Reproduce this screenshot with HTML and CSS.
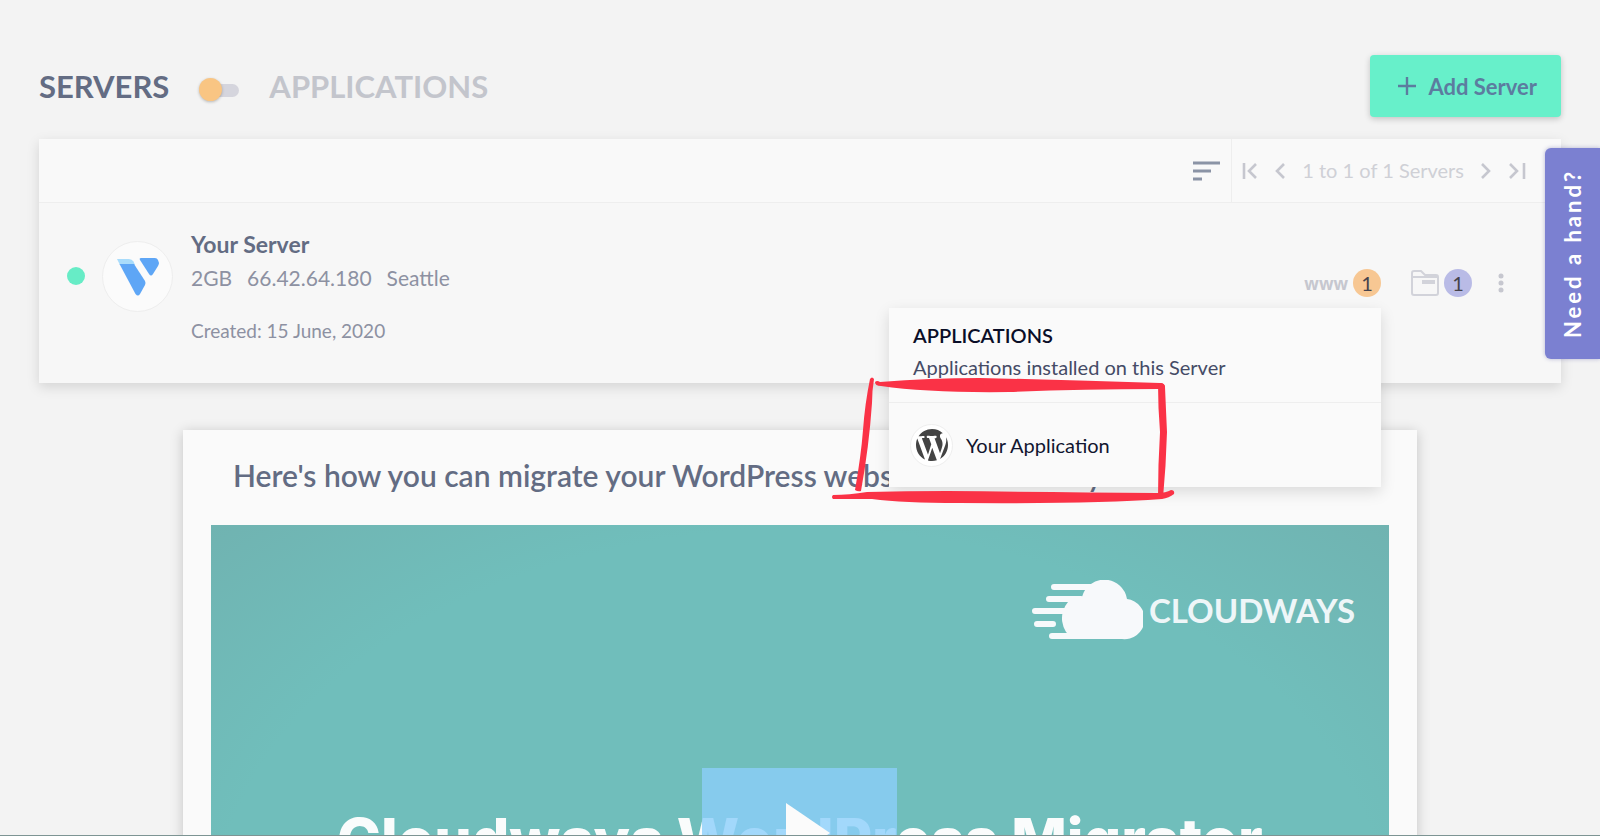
FILE: index.html
```html
<!DOCTYPE html>
<html lang="en">
<head>
    <meta charset="UTF-8">
    <meta name="viewport" content="width=device-width, initial-scale=1.0">
    <title>Servers</title>
    <link rel="stylesheet" href="styles.css">
</head>
<body>
    <header class="topbar">
        <label class="view-switch">
            <span class="view-name active">SERVERS</span>
            <input type="checkbox" class="switch" aria-label="Show applications">
            <span class="view-name">APPLICATIONS</span>
        </label>
        <button type="button" class="add-server">
            <svg width="18" height="18" viewBox="0 0 18 18"><path d="M9 0v18M0 9h18" stroke="currentColor" stroke-width="2.4"/></svg>
            Add Server
        </button>
    </header>

    <main>
        <!-- Server list -->
        <section class="panel">
            <div class="toolbar">
                <button type="button" class="icon-btn sort" aria-label="Sort">
                    <svg width="28" height="20" viewBox="0 0 28 20"><path d="M0 2h27M0 10h18M0 18h9" stroke="currentColor" stroke-width="3"/></svg>
                </button>
                <nav class="pager">
                    <button type="button" class="icon-btn" aria-label="First page">
                        <svg width="16" height="16" viewBox="0 0 16 16"><path d="M2 0v16M14 1L7 8l7 7" fill="none" stroke="currentColor" stroke-width="2.6"/></svg>
                    </button>
                    <button type="button" class="icon-btn" aria-label="Previous page">
                        <svg width="12" height="16" viewBox="0 0 12 16"><path d="M10 1L3 8l7 7" fill="none" stroke="currentColor" stroke-width="2.6"/></svg>
                    </button>
                    <span class="pager-text">1 to 1 of 1 Servers</span>
                    <button type="button" class="icon-btn" aria-label="Next page">
                        <svg width="12" height="16" viewBox="0 0 12 16"><path d="M2 1l7 7-7 7" fill="none" stroke="currentColor" stroke-width="2.6"/></svg>
                    </button>
                    <button type="button" class="icon-btn" aria-label="Last page">
                        <svg width="18" height="16" viewBox="0 0 18 16"><path d="M2 1l7 7-7 7M16 0v16" fill="none" stroke="currentColor" stroke-width="2.6"/></svg>
                    </button>
                </nav>
            </div>

            <div class="server">
                <span class="status"></span>
                <div class="avatar">
                    <svg width="44" height="40" viewBox="0 0 44 40">
                        <path d="M1 2h12q3 0 4.500 2.500L19 8H4z" fill="#a9dcfb"/>
                        <path d="M3.500 7H18l11 17q1 2 0 4l-5 9q-2 3-4.500 0z" fill="#5ea6f6"/>
                        <path d="M25 1h14q2 0 3 2l1 3q0 1-1 3l-5 8q-2 3-4 0l-9-14q-1-2 1-2z" fill="#5ea6f6"/>
                    </svg>
                </div>
                <div class="server-info">
                    <h2>Your Server</h2>
                    <p class="specs"><span>2GB</span><span>66.42.64.180</span><span>Seattle</span></p>
                    <p class="created">Created: 15 June, 2020</p>
                </div>
                <div class="server-actions">
                    <div class="apps">
                        <button type="button" class="count-btn">
                            <span class="www">www</span>
                            <span class="badge orange">1</span>
                        </button>
                        <div class="dropdown">
                            <div class="dropdown-head">
                                <h3>APPLICATIONS</h3>
                                <p>Applications installed on this Server</p>
                            </div>
                            <a href="#" class="app">
                                <span class="app-icon">
                                    <svg width="36" height="36" viewBox="0 0 20 20"><path fill="#444" d="M7.780 15.370L4.370 6.220c.55-.02 1.170-.08 1.170-.08.5-.06.44-1.130-.06-1.110 0 0-1.450.11-2.370.11-.18 0-.37 0-.58-.01C4.120 2.690 6.870 1.110 10 1.110c2.330 0 4.450.87 6.050 2.340-.68-.11-1.650.39-1.650 1.580 0 .74.45 1.360.9 2.100.35.61.55 1.360.55 2.460 0 1.490-1.400 5-1.400 5l-3.030-8.370c.54-.02.82-.17.82-.17.5-.05.44-1.250-.06-1.220 0 0-1.440.12-2.380.12-.87 0-2.330-.12-2.330-.12-.5-.03-.56 1.200-.06 1.220l.92.08 1.260 3.410zM17.410 10c.24-.64.74-1.870.43-4.250.7 1.290 1.050 2.710 1.050 4.250 0 3.290-1.730 6.240-4.400 7.780.97-2.590 1.940-5.200 2.920-7.780zM6.100 18.090C3.120 16.650 1.110 13.530 1.110 10c0-1.300.23-2.480.72-3.590C3.250 10.300 4.670 14.200 6.100 18.090zm4.030-6.630l2.580 6.980c-.86.29-1.760.45-2.710.45-.79 0-1.570-.11-2.290-.33.81-2.380 1.620-4.740 2.420-7.100z"/></svg>
                                </span>
                                Your Application
                            </a>
                            <!-- Hand drawn marker around the application -->
                            <svg class="marker" width="344" height="128" viewBox="832 376 344 128" fill="#fa3246">
                                <path d="M870 379q2-3 4 0-2 12-2 24-3 44-11 88-3 1-6-1 6-34 8-60 2-27 7-51z"/>
                                <path d="M875 382q2-2 5 0 50-4 100-4 90 2 180 5 5 0 5 4-1 2-6 2-80 0-150 3-80 1-128-6-6 0-6-4z"/>
                                <path d="M1160 383q4 0 5 4 1 24 2 45-1 34-4 66-3 2-5 0 0-34 2-66-2-24-2-48z"/>
                                <path d="M833 495q16 0 34-3 40-1 80-1 110 1 210 2 9 0 14-3 4 0 3 4-5 4-12 5-70 5-203 4-56 0-87-4-18 0-39 0-2-2 0-4z"/>
                            </svg>
                        </div>
                    </div>
                    <button type="button" class="count-btn">
                        <svg width="28" height="28" viewBox="0 0 28 28" fill="none" stroke="#d2d3da" stroke-width="2"><path d="M1 8V4q0-2 2-2h7l4 4h11q2 0 2 2v16q0 2-2 2H3q-2 0-2-2zM1 8h26"/><path d="M11 13h13" stroke-width="4"/></svg>
                        <span class="badge purple">1</span>
                    </button>
                    <button type="button" class="icon-btn more" aria-label="More">
                        <svg width="6" height="20" viewBox="0 0 6 20" fill="currentColor"><circle cx="3" cy="3" r="2.500"/><circle cx="3" cy="10" r="2.500"/><circle cx="3" cy="17" r="2.500"/></svg>
                    </button>
                </div>
            </div>
        </section>

        <!-- Migration guide -->
        <section class="guide">
            <h2>Here's how you can migrate your WordPress website to Cloudways</h2>
            <div class="video">
                <div class="brand">
                    <svg width="112" height="60" viewBox="0 0 112 60" fill="#f7f9fb">
                        <path d="M42 59A25 25 0 0 1 37 22Q44 17 51 17A23 23 0 0 1 96 19A20 20 0 0 1 91 59z"/>
                        <path d="M23 7h42M18 19h32M4 31h40M6 44h16M36 44h6M21 56h60" stroke="#f7f9fb" stroke-width="6" stroke-linecap="round"/>
                    </svg>
                    <span>CLOUDWAYS</span>
                </div>
                <p class="video-title">Cloudways WordPress Migrator</p>
                <button type="button" class="play" aria-label="Play video">
                    <svg width="44" height="60" viewBox="0 0 44 60"><path d="M0 0l44 30L0 60z" fill="#fbfbfb"/></svg>
                </button>
            </div>
        </section>
    </main>

    <button type="button" class="help">Need a hand?</button>
</body>
</html>
```
FILE: styles.css
```css
* {
    box-sizing: border-box;
}
body {
    font-family: Lato, "Open Sans", sans-serif;
    background-color: #f3f3f3;
    color: #636c83;
    margin: 0;
    height: 100vh;
    overflow: hidden;
    border-bottom: 1px solid #7d9493;
}
h2, h3, p {
    margin: 0;
}
button {
    font-family: inherit;
    border: none;
    background: none;
    padding: 0;
    cursor: pointer;
}
svg {
    display: block;
}
.topbar {
    display: flex;
    justify-content: space-between;
    align-items: center;
    padding: 55px 39px 22px;
}
.view-switch {
    display: flex;
    align-items: center;
    gap: 30px;
}
.view-name {
    font-size: 31px;
    font-weight: 700;
    line-height: 40px;
    color: #c3c5cc;
}
.view-name.active {
    color: #636c83;
}
.switch {
    appearance: none;
    position: relative;
    width: 40px;
    height: 23px;
    margin: 6px 0 0;
}
.switch::before {
    content: "";
    position: absolute;
    right: 0;
    top: 6px;
    width: 30px;
    height: 13px;
    border-radius: 7px;
    background-color: #d5d5dd;
}
.switch::after {
    content: "";
    position: absolute;
    left: 0;
    top: 0;
    width: 23px;
    height: 23px;
    border-radius: 50%;
    background-color: #f9c583;
    box-shadow: 0 1px 3px rgba(0, 0, 0, 0.25);
}
.add-server {
    display: flex;
    align-items: center;
    gap: 12px;
    height: 62px;
    padding: 0 24px 0 28px;
    border-radius: 4px;
    background-color: #67f0ca;
    color: #5c7c9f;
    font-size: 22px;
    font-weight: 700;
    box-shadow: 0 2px 6px rgba(0, 0, 0, 0.2);
}
.panel {
    margin: 0 39px;
    background-color: #f7f7f7;
    box-shadow: 0 4px 12px rgba(0, 0, 0, 0.13);
}
.toolbar {
    display: flex;
    justify-content: flex-end;
    height: 64px;
    background-color: #f9f9f9;
    border-bottom: 1px solid #eee;
}
.icon-btn {
    color: #c6c7cf;
}
.sort {
    color: #8b94a6;
    margin-right: 10px;
}
.pager {
    display: flex;
    align-items: center;
    gap: 16px;
    padding: 0 35px 0 10px;
    border-left: 1px solid #eee;
}
.pager-text {
    font-size: 20px;
    line-height: 26px;
    padding-bottom: 2px;
    color: #cfd0d6;
}
.server {
    display: flex;
    align-items: flex-start;
    height: 180px;
    padding: 25px 57px 0 28px;
}
.status {
    width: 18px;
    height: 18px;
    margin: 39px 17px 0 0;
    border-radius: 50%;
    background-color: #67ecc6;
}
.avatar {
    display: flex;
    align-items: center;
    justify-content: center;
    width: 71px;
    height: 71px;
    margin: 13px 18px 0 0;
    border: 1px solid #eee;
    border-radius: 50%;
    background-color: #fbfbfb;
}
.server-info h2 {
    font-size: 23px;
    font-weight: 700;
    line-height: 32px;
}
.specs {
    display: flex;
    gap: 15px;
    font-size: 21px;
    line-height: 36px;
    color: #8d91a2;
}
.created {
    margin-top: 19px;
    font-size: 19px;
    line-height: 32px;
    color: #8d91a2;
}
.server-actions {
    display: flex;
    align-items: center;
    margin: 41px 0 0 auto;
}
.apps {
    position: relative;
    margin-right: 30px;
}
.count-btn {
    display: flex;
    align-items: center;
    gap: 5px;
}
.www {
    font-family: "Open Sans", sans-serif;
    font-size: 17px;
    font-weight: 700;
    color: #c6c7cf;
}
.badge {
    width: 28px;
    height: 28px;
    border-radius: 50%;
    font-size: 20px;
    line-height: 28px;
    color: #46434c;
}
.orange {
    background-color: #f7c793;
}
.purple {
    background-color: #b9bbe6;
}
.more {
    margin-left: 26px;
}
.dropdown {
    position: absolute;
    z-index: 2;
    top: 39px;
    right: 0;
    width: 492px;
    background-color: #fafafa;
    box-shadow: 0 5px 14px rgba(0, 0, 0, 0.13);
}
.dropdown-head {
    height: 95px;
    padding: 11px 24px 0;
    border-bottom: 1px solid #eee;
}
.dropdown-head h3 {
    font-size: 20px;
    font-weight: 600;
    line-height: 32px;
    color: #0a0e28;
}
.dropdown-head p {
    font-size: 20px;
    line-height: 32px;
    color: #454b66;
}
.app {
    display: flex;
    align-items: center;
    gap: 13px;
    height: 84px;
    padding: 0 21px;
    font-size: 20px;
    color: #11152f;
    text-decoration: none;
}
.app-icon {
    display: flex;
    align-items: center;
    justify-content: center;
    width: 43px;
    height: 43px;
    border: 1px solid #eee;
    border-radius: 50%;
    background-color: #fff;
}
.marker {
    position: absolute;
    left: -57px;
    top: 68px;
    pointer-events: none;
}
.guide {
    max-width: 1234px;
    margin: 47px auto 0;
    padding: 26px 28px 0;
    background-color: #fafafa;
    box-shadow: 0 2px 12px rgba(0, 0, 0, 0.2);
}
.guide h2 {
    padding-left: 22px;
    font-size: 30px;
    font-weight: 600;
    line-height: 38px;
}
.video {
    position: relative;
    height: 650px;
    margin-top: 31px;
    padding: 55px 34px 0;
    background: radial-gradient(ellipse at 50% 60%, #70bebb 70%, #70b3b1);
}
.brand {
    display: flex;
    align-items: center;
    justify-content: flex-end;
    gap: 6px;
    color: #eef6f8;
    font-size: 33px;
    font-weight: 700;
}
.video-title {
    margin-top: 160px;
    font-family: Inter, sans-serif;
    font-size: 59px;
    font-weight: 800;
    line-height: 80px;
    text-align: center;
    white-space: nowrap;
    color: #fafcfc;
}
.play {
    display: flex;
    align-items: center;
    justify-content: center;
    position: absolute;
    top: 243px;
    left: 50%;
    width: 195px;
    height: 130px;
    margin-left: -98px;
    padding-left: 16px;
    background-color: rgba(140, 206, 250, 0.8);
}
.help {
    position: absolute;
    z-index: 3;
    top: 148px;
    right: 0;
    width: 55px;
    height: 211px;
    border-radius: 0 6px 6px 0;
    background-color: #7b80d1;
    color: #fff;
    font-size: 22px;
    font-weight: 700;
    letter-spacing: 3px;
    writing-mode: vertical-rl;
    transform: rotate(180deg);
    box-shadow: 0 0 4px rgba(80, 80, 160, 0.4);
}
```
